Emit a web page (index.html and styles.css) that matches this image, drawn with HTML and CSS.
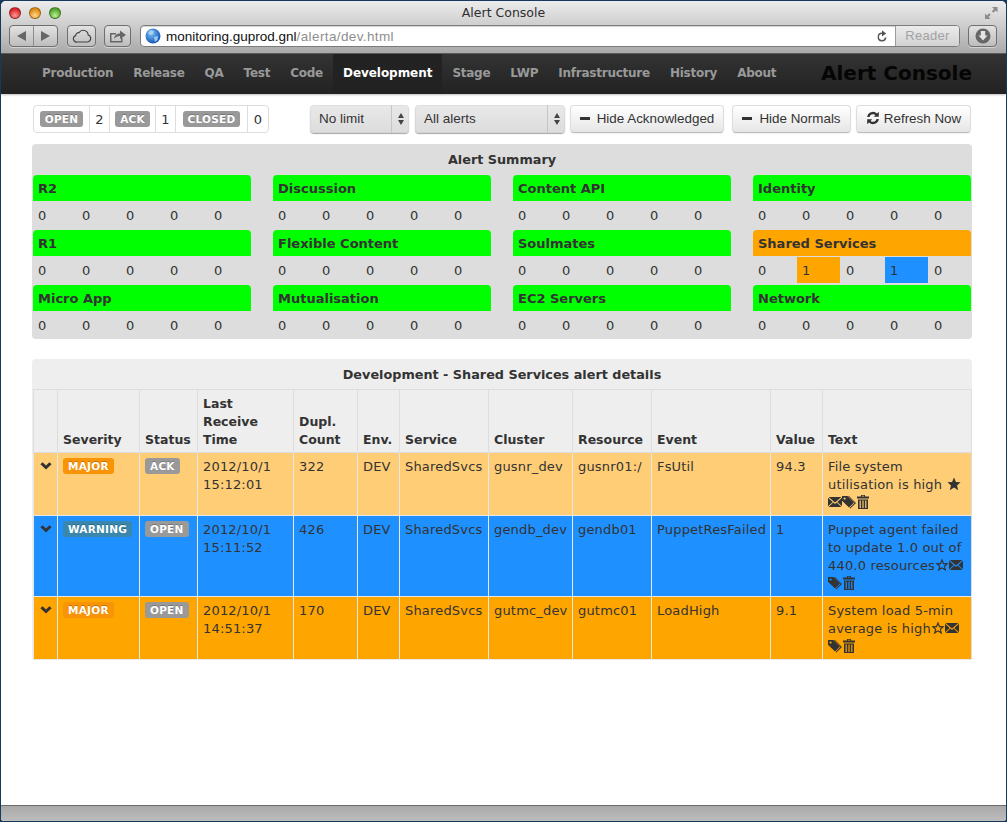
FILE: index.html
```html
<!DOCTYPE html>
<html lang="en">
<head>
<meta charset="utf-8">
<title>Alert Console</title>
<link rel="stylesheet" href="styles.css">
</head>
<body>
<svg class="defs" width="0" height="0" aria-hidden="true">
  <symbol id="i-chev" viewBox="0 0 14 14"><path d="M0.5 5 L3 2.5 L7 6.5 L11 2.5 L13.5 5 L7 11.2 Z"/></symbol>
  <symbol id="i-star" viewBox="0 0 14 14"><path d="M7 0.5 L8.9 5 L13.6 5.3 L10 8.4 L11.2 13.2 L7 10.6 L2.8 13.2 L4 8.4 L0.4 5.3 L5.1 5 Z"/></symbol>
  <symbol id="i-star-o" viewBox="0 0 14 14"><path fill-rule="evenodd" d="M7 0.5 L8.9 5 L13.6 5.3 L10 8.4 L11.2 13.2 L7 10.6 L2.8 13.2 L4 8.4 L0.4 5.3 L5.1 5 Z M7 3.6 L5.9 6.2 L3.3 6.4 L5.3 8 L4.6 10.6 L7 9.2 L9.4 10.6 L8.7 8 L10.7 6.4 L8.1 6.2 Z"/></symbol>
  <symbol id="i-mail" viewBox="0 0 14 14"><path d="M.6 2 H13.4 L7 7.6 Z M0 2.7 V11.3 L4.7 7 Z M14 2.7 V11.3 L9.3 7 Z M.6 12 H13.4 L8.7 7.6 L7 9 L5.3 7.6 Z"/></symbol>
  <symbol id="i-tags" viewBox="0 0 14 14"><path fill-rule="evenodd" d="M0 1 H5.5 L12 7.5 L7 12.5 L0 5.8 Z M2.6 2.4 A1.1 1.1 0 1 0 2.61 2.4 Z"/><path d="M7 1 L14 8 L8.4 13.6 L7.6 12.9 L12.6 7.7 L6 1 Z"/></symbol>
  <symbol id="i-trash" viewBox="0 0 14 14"><path fill-rule="evenodd" d="M5 0 H9 V1.5 H13 V3.5 H1 V1.5 H5 Z M6 .8 V1.5 H8 V.8 Z M2 4.5 H12 V14 H2 Z M3.6 5.5 V13 H4.8 V5.5 Z M6.4 5.5 V13 H7.6 V5.5 Z M9.2 5.5 V13 H10.4 V5.5 Z"/></symbol>
</svg>
<div class="window">
  <header class="chrome">
    <div class="titlebar">
      <div class="lights"><span class="light red"></span><span class="light amber"></span><span class="light green"></span></div>
      <div class="wintitle">Alert Console</div>
      <svg class="fullscreen" width="13" height="14" viewBox="0 0 13 14"><path d="M7 1 H12.5 V6.5 L10.6 4.6 L8.4 6.8 L6.8 5.2 L9 3 Z M5.5 13 H0 V7.5 L1.9 9.4 L4.1 7.2 L5.7 8.8 L3.5 11 Z" fill="#8b8b8b"/></svg>
    </div>
    <div class="toolbar">
      <div class="tbtn backfwd">
        <span class="seg"><svg width="9" height="10" viewBox="0 0 9 10"><path d="M9 0 V10 L0 5 Z" fill="#666"/></svg></span>
        <span class="seg seg-r"><svg width="9" height="10" viewBox="0 0 9 10"><path d="M0 0 V10 L9 5 Z" fill="#666"/></svg></span>
      </div>
      <div class="tbtn cloud"><svg width="20" height="14" viewBox="0 0 20 14"><path d="M5 13 H15.5 A3.6 3.6 0 0 0 16.2 6 A5 5 0 0 0 7 3.6 A3.2 3.2 0 0 0 3.6 6.6 A3.3 3.3 0 0 0 5 13 Z" fill="none" stroke="#444" stroke-width="1.2"/></svg></div>
      <div class="tbtn share"><svg width="18" height="14" viewBox="0 0 18 14"><path d="M1 4 H7 V5.5 H2.5 V12 H12 V9 H13.5 V13.5 H1 Z" fill="#666"/><path d="M5 10 C5.5 6 8 4.5 11 4.5 V1.5 L17 6 L11 10 V7 C8.5 7 6.5 8 5 10 Z" fill="#666"/></svg></div>
      <div class="address">
        <svg class="globe" width="16" height="16" viewBox="0 0 16 16"><defs><radialGradient id="g-globe" cx="40%" cy="35%" r="70%"><stop offset="0" stop-color="#7cc0f5"/><stop offset="1" stop-color="#0c4fb4"/></radialGradient></defs><circle cx="8" cy="8" r="7.5" fill="url(#g-globe)"/><path d="M5 2 L9 3 L8 6 L5 7 L3 5 Z M9 9 L13 8 L12.5 12 L10 14 Z" fill="#b9dcf5" opacity=".8"/></svg>
        <span class="url">monitoring.guprod.gnl<span class="url-path">/alerta/dev.html</span></span>
        <svg class="reload" width="12" height="13" viewBox="0 0 12 13"><path d="M6 2.6 A4.4 4.4 0 1 0 10.4 7.4 H8.8 A2.9 2.9 0 1 1 6 4.1 V6.4 L10.2 3.4 L6 0.2 Z" fill="#555"/></svg>
        <span class="reader">Reader</span>
      </div>
      <div class="tbtn download"><svg width="16" height="16" viewBox="0 0 16 16"><circle cx="8" cy="8" r="7.5" fill="#666"/><path d="M5.8 3 H10.2 V7.5 H12.5 L8 12.5 L3.5 7.5 H5.8 Z" fill="#e4e4e4"/></svg></div>
    </div>
  </header>

  <nav class="navbar">
    <ul class="nav">
      <li class="nav-item">Production</li>
      <li class="nav-item">Release</li>
      <li class="nav-item">QA</li>
      <li class="nav-item">Test</li>
      <li class="nav-item">Code</li>
      <li class="nav-item active">Development</li>
      <li class="nav-item">Stage</li>
      <li class="nav-item">LWP</li>
      <li class="nav-item">Infrastructure</li>
      <li class="nav-item">History</li>
      <li class="nav-item">About</li>
    </ul>
    <div class="brand">Alert Console</div>
  </nav>

  <main class="content">
    <div class="controls">
      <div class="counts">
        <div class="count-cell c-open"><span class="badge grey">OPEN</span></div>
        <div class="count-cell c-num">2</div>
        <div class="count-cell c-ack"><span class="badge grey">ACK</span></div>
        <div class="count-cell c-num">1</div>
        <div class="count-cell c-closed"><span class="badge grey">CLOSED</span></div>
        <div class="count-cell c-num c-last">0</div>
      </div>
      <div class="select s-limit"><span class="select-label">No limit</span><span class="stepper"><i class="up"></i><i class="down"></i></span></div>
      <div class="select s-alerts"><span class="select-label">All alerts</span><span class="stepper"><i class="up"></i><i class="down"></i></span></div>
      <button class="btn b-ack"><span class="minus"></span>Hide Acknowledged</button>
      <button class="btn b-norm"><span class="minus"></span>Hide Normals</button>
      <button class="btn b-refresh"><svg class="refresh" width="14" height="14" viewBox="0 0 14 14"><path d="M1.2 6 A5.8 5.8 0 0 1 11 2.4 L12.8 .8 V5.8 H7.8 L9.4 4.1 A3.6 3.6 0 0 0 3.5 6 Z M12.8 8 A5.8 5.8 0 0 1 3 11.6 L1.2 13.2 V8.2 H6.2 L4.6 9.9 A3.6 3.6 0 0 0 10.5 8 Z" fill="#333"/></svg>Refresh Now</button>
    </div>

    <section class="summary">
      <h2 class="panel-title">Alert Summary</h2>
      <div class="cards">
        <div class="card"><div class="card-head ok">R2</div><div class="vals"><span>0</span><span>0</span><span>0</span><span>0</span><span>0</span></div></div>
        <div class="card"><div class="card-head ok">Discussion</div><div class="vals"><span>0</span><span>0</span><span>0</span><span>0</span><span>0</span></div></div>
        <div class="card"><div class="card-head ok">Content API</div><div class="vals"><span>0</span><span>0</span><span>0</span><span>0</span><span>0</span></div></div>
        <div class="card"><div class="card-head ok">Identity</div><div class="vals"><span>0</span><span>0</span><span>0</span><span>0</span><span>0</span></div></div>
        <div class="card"><div class="card-head ok">R1</div><div class="vals"><span>0</span><span>0</span><span>0</span><span>0</span><span>0</span></div></div>
        <div class="card"><div class="card-head ok">Flexible Content</div><div class="vals"><span>0</span><span>0</span><span>0</span><span>0</span><span>0</span></div></div>
        <div class="card"><div class="card-head ok">Soulmates</div><div class="vals"><span>0</span><span>0</span><span>0</span><span>0</span><span>0</span></div></div>
        <div class="card"><div class="card-head major">Shared Services</div><div class="vals"><span>0</span><span class="v-major">1</span><span>0</span><span class="v-warn">1</span><span>0</span></div></div>
        <div class="card"><div class="card-head ok">Micro App</div><div class="vals"><span>0</span><span>0</span><span>0</span><span>0</span><span>0</span></div></div>
        <div class="card"><div class="card-head ok">Mutualisation</div><div class="vals"><span>0</span><span>0</span><span>0</span><span>0</span><span>0</span></div></div>
        <div class="card"><div class="card-head ok">EC2 Servers</div><div class="vals"><span>0</span><span>0</span><span>0</span><span>0</span><span>0</span></div></div>
        <div class="card"><div class="card-head ok">Network</div><div class="vals"><span>0</span><span>0</span><span>0</span><span>0</span><span>0</span></div></div>
      </div>
    </section>

    <section class="details">
      <h2 class="panel-title pt-details">Development - Shared Services alert details</h2>
      <table class="alerts">
        <colgroup>
          <col class="w-a"><col class="w-b"><col class="w-c"><col class="w-d"><col class="w-e"><col class="w-f"><col class="w-g"><col class="w-h"><col class="w-i"><col class="w-j"><col class="w-k"><col class="w-l">
        </colgroup>
        <thead>
          <tr><th></th><th>Severity</th><th>Status</th><th>Last Receive Time</th><th>Dupl. Count</th><th>Env.</th><th>Service</th><th>Cluster</th><th>Resource</th><th>Event</th><th>Value</th><th>Text</th></tr>
        </thead>
        <tbody>
          <tr class="r-ack">
            <td><svg class="ico chev"><use href="#i-chev"/></svg></td>
            <td><span class="badge orange">MAJOR</span></td>
            <td><span class="badge grey">ACK</span></td>
            <td>2012/10/1 15:12:01</td><td>322</td><td>DEV</td><td>SharedSvcs</td><td>gusnr_dev</td><td>gusnr01:/</td><td>FsUtil</td><td>94.3</td>
            <td>File system utilisation is high <svg class="ico"><use href="#i-star"/></svg><svg class="ico"><use href="#i-mail"/></svg><svg class="ico"><use href="#i-tags"/></svg><svg class="ico"><use href="#i-trash"/></svg></td>
          </tr>
          <tr class="r-warn">
            <td><svg class="ico chev"><use href="#i-chev"/></svg></td>
            <td><span class="badge blue">WARNING</span></td>
            <td><span class="badge grey">OPEN</span></td>
            <td>2012/10/1 15:11:52</td><td>426</td><td>DEV</td><td>SharedSvcs</td><td>gendb_dev</td><td>gendb01</td><td>PuppetResFailed</td><td>1</td>
            <td>Puppet agent failed to update 1.0 out of 440.0 resources<svg class="ico"><use href="#i-star-o"/></svg><svg class="ico"><use href="#i-mail"/></svg><svg class="ico"><use href="#i-tags"/></svg><svg class="ico"><use href="#i-trash"/></svg></td>
          </tr>
          <tr class="r-major">
            <td><svg class="ico chev"><use href="#i-chev"/></svg></td>
            <td><span class="badge orange">MAJOR</span></td>
            <td><span class="badge grey">OPEN</span></td>
            <td>2012/10/1 14:51:37</td><td>170</td><td>DEV</td><td>SharedSvcs</td><td>gutmc_dev</td><td>gutmc01</td><td>LoadHigh</td><td>9.1</td>
            <td>System load 5-min average is high<svg class="ico"><use href="#i-star-o"/></svg><svg class="ico"><use href="#i-mail"/></svg><svg class="ico"><use href="#i-tags"/></svg><svg class="ico"><use href="#i-trash"/></svg></td>
          </tr>
        </tbody>
      </table>
    </section>
  </main>

  <footer class="statusbar"></footer>
</div>
</body>
</html>
```

FILE: styles.css
```css
* { box-sizing: border-box; }
html, body { margin: 0; padding: 0; height: 100%; }
body {
  background: #17395c;
  padding: 1px 1px 1px;
  overflow: hidden;
  font-family: "DejaVu Sans", Verdana, sans-serif;
  font-size: 13px;
  color: #333;
}
.defs { position: absolute; }
.window {
  height: 100%;
  display: flex;
  flex-direction: column;
  background: #fff;
  border-radius: 5px 5px 3px 3px;
  overflow: hidden;
}

/* browser chrome */
.chrome {
  height: 53px;
  flex: none;
  background: linear-gradient(#ececec, #d2d2d2 40%, #a9a9a9);
  border-bottom: 1px solid #5c5c5c;
  font-family: "Liberation Sans", Arial, sans-serif;
}
.titlebar {
  height: 24px;
  display: flex;
  align-items: center;
  padding: 0 8px 0 8px;
}
.lights { display: flex; gap: 8px; width: 60px; }
.light { width: 12px; height: 12px; border-radius: 50%; border: 1px solid rgba(0,0,0,.35); }
.red { background: radial-gradient(circle at 50% 75%, #ff9a94, #d8242c 70%); }
.amber { background: radial-gradient(circle at 50% 75%, #ffd88a, #e08a14 70%); }
.green { background: radial-gradient(circle at 50% 75%, #c0f090, #4fa52e 70%); }
.wintitle {
  flex: 1;
  text-align: center;
  font-family: "DejaVu Sans", sans-serif;
  font-size: 12.5px;
  line-height: 23px;
  height: 24px;
  color: #2e2e2e;
  padding-right: 47px;
}
.toolbar {
  height: 22px;
  display: flex;
  align-items: stretch;
  padding-left: 8px;
}
.tbtn {
  height: 22px;
  display: flex;
  align-items: center;
  justify-content: center;
  border: 1px solid #6f6f6f;
  border-radius: 4px;
  background: linear-gradient(#e2e2e2, #bdbdbd);
  box-shadow: 0 1px 0 rgba(255,255,255,.45);
}
.backfwd { width: 49px; }
.seg { flex: 1; height: 100%; display: flex; align-items: center; justify-content: center; }
.seg-r { border-left: 1px solid #8d8d8d; }
.cloud { width: 29px; margin-left: 9px; }
.share { width: 27px; margin-left: 8px; }
.address {
  width: 820px;
  margin-left: 9px;
  display: flex;
  align-items: center;
  background: #fff;
  border: 1px solid #7c7c7c;
  border-radius: 4px;
  box-shadow: inset 0 1px 1px rgba(0,0,0,.18);
  overflow: hidden;
}
.globe { margin-left: 4px; flex: none; }
.url { margin-left: 5px; font-size: 13.5px; color: #111; flex: 1; white-space: nowrap; }
.url-path { color: #8e8e8e; letter-spacing: .38px; }
.reload { margin-right: 7px; flex: none; }
.reader {
  width: 64px;
  height: 100%;
  text-align: center;
  font-size: 13px;
  line-height: 20px;
  color: #a2a2a2;
  letter-spacing: .3px;
  border-left: 1px solid #9c9c9c;
  background: linear-gradient(#ececec, #d2d2d2);
  flex: none;
}
.download { width: 29px; margin-left: 8px; }

/* app navbar */
.navbar {
  height: 40px;
  flex: none;
  display: flex;
  background: linear-gradient(#333, #222);
  box-shadow: 0 1px 2px rgba(0,0,0,.25);
  padding-left: 31px;
}
.nav { list-style: none; margin: 0; padding: 0; display: flex; }
.nav-item {
  padding: 0 10px;
  line-height: 38px;
  font-size: 12px;
  font-weight: 700;
  letter-spacing: -.25px;
  color: #999;
  white-space: nowrap;
}
.nav-item.active { color: #fff; background: #222; letter-spacing: -.05px; }
.brand {
  margin-left: auto;
  margin-right: 34px;
  font-size: 20px;
  line-height: 38px;
  font-weight: 700;
  color: #050505;
  white-space: nowrap;
}

/* page */
.content { flex: 1; padding: 11px 34px 0 31px; min-height: 0; }
.controls { display: flex; height: 28px; padding-left: 1px; }
.counts {
  display: flex;
  height: 28px;
  border: 1px solid #ddd;
  border-radius: 4px;
  background: #fff;
}
.count-cell {
  display: flex;
  align-items: center;
  justify-content: center;
  border-right: 1px solid #ddd;
}
.c-open { width: 56px; }
.c-ack { width: 46px; }
.c-closed { width: 72px; }
.c-num { width: 20px; }
.c-last { width: 20px; border-right: 0; }

.badge {
  display: inline-block;
  height: 16px;
  padding: 0 5px;
  border-radius: 3px;
  font-size: 10.5px;
  line-height: 16px;
  font-weight: 700;
  letter-spacing: .25px;
  color: #fff;
  text-shadow: 0 -1px 0 rgba(0,0,0,.25);
  vertical-align: top;
}
.grey { background: #999; }
.orange { background: #f89406; }
.blue { background: #3a87ad; }

.select {
  height: 28px;
  display: flex;
  align-items: stretch;
  border-radius: 4px;
  background: linear-gradient(#e9e9e9, #dcdcdc);
  box-shadow: 0 1px 1px rgba(0,0,0,.35), inset 0 0 0 1px rgba(0,0,0,.04);
  font-family: "Liberation Sans", Arial, sans-serif;
  font-size: 13.5px;
  color: #333;
}
.select-label { flex: 1; padding-left: 9px; line-height: 27px; }
.stepper {
  width: 18px;
  border-left: 1px solid #c6c6c6;
  display: flex;
  flex-direction: column;
  align-items: center;
  justify-content: center;
  gap: 2px;
}
.stepper i { display: block; width: 0; height: 0; border-left: 3.5px solid transparent; border-right: 3.5px solid transparent; }
.stepper .up { border-bottom: 5px solid #444; }
.stepper .down { border-top: 5px solid #444; }
.s-limit { width: 99px; margin-left: 41px; }
.s-alerts { width: 150px; margin-left: 6px; }

.btn {
  height: 28px;
  margin: 0;
  padding: 0 0 2px;
  display: flex;
  align-items: center;
  justify-content: center;
  border: 1px solid #ddd;
  border-bottom-color: #bbb;
  border-radius: 4px;
  background: linear-gradient(#fff, #e6e6e6);
  box-shadow: 0 1px 2px rgba(0,0,0,.06);
  font-family: "Liberation Sans", Arial, sans-serif;
  font-size: 13.4px;
  color: #333;
  white-space: nowrap;
}
.b-ack { width: 154px; margin-left: 5px; }
.b-norm { width: 119px; margin-left: 8px; }
.b-refresh { width: 115px; margin-left: 5px; }
.minus { width: 10px; height: 3px; background: #333; margin-right: 7px; }
.refresh { margin-right: 4px; }

.summary {
  margin-top: 11px;
  height: 195px;
  padding: 0 1px;
  background: #ddd;
  border-radius: 4px;
}
.panel-title {
  margin: 0;
  height: 31px;
  line-height: 31px;
  text-align: center;
  font-size: 12.8px;
  font-weight: 700;
  color: #333;
}
.pt-details { height: 30px; line-height: 31px; }
.cards {
  display: grid;
  grid-template-columns: repeat(4, 218px);
  column-gap: 22px;
  row-gap: 1px;
}
.card-head {
  height: 26px;
  padding-left: 5px;
  line-height: 27px;
  font-size: 13px;
  font-weight: 700;
  border-radius: 4px 4px 0 0;
}
.ok { background: #0f0; }
.major { background: #ffa500; }
.vals {
  height: 28px;
  padding-top: 1px;
  display: grid;
  grid-template-columns: repeat(5, 44px);
}
.vals span { height: 26px; margin-right: 1px; padding-left: 5px; line-height: 27px; font-size: 13px; }
.v-major { background: #ffa500; }
.v-warn { background: #1e90ff; }

.details {
  margin-top: 20px;
  height: 301px;
  padding: 0 1px;
  background: #eee;
  border-radius: 4px;
}
.alerts {
  width: 938px;
  table-layout: fixed;
  border-collapse: collapse;
  font-size: 13px;
  line-height: 18px;
}
.alerts th, .alerts td {
  border: 1px solid #ddd;
  padding: 5px 5px 3px;
  text-align: left;
  vertical-align: top;
  letter-spacing: .18px;
}
.alerts th { vertical-align: bottom; font-size: 12.5px; font-weight: 700; letter-spacing: 0; }
.alerts td { border-color: #e8e8e8; }
.alerts td:last-child, .alerts th:last-child { border-right-color: #ddd; }
.alerts td:first-child { padding-left: 4px; }
.w-a { width: 24px; }
.w-b { width: 82px; }
.w-c { width: 58px; }
.w-d { width: 96px; }
.w-e { width: 64px; }
.w-f { width: 42px; }
.w-g { width: 89px; }
.w-h { width: 84px; }
.w-i { width: 79px; }
.w-j { width: 119px; }
.w-k { width: 52px; }
.w-l { width: 149px; }
.r-ack td { background: #ffcd76; }
.r-warn td { background: #1e90ff; }
.r-major td { background: #ffa500; }
.ico {
  display: inline-block;
  width: 14px;
  height: 14px;
  vertical-align: text-top;
  fill: #333;
}
.ico.chev { display: block; width: 12px; height: 12px; margin: 2px 0 0 2px; }

.statusbar {
  height: 16px;
  flex: none;
  border-top: 1px solid #6c6c6c;
  background: linear-gradient(#a9a9a9, #bcbcbc);
}
```
